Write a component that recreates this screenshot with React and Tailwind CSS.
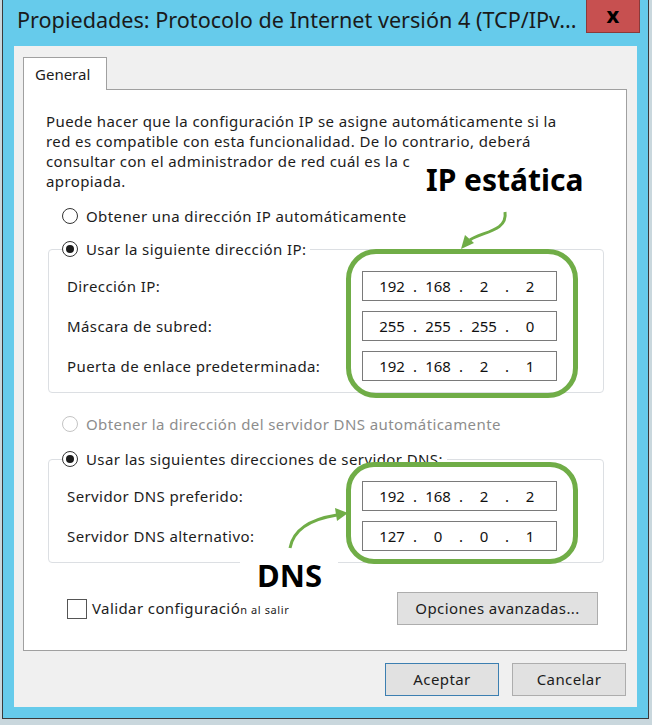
const font = { fontFamily: '"Noto Sans", "Open Sans", sans-serif' };

function Radio({ checked, disabled }) {
  return (
    <span
      className={`w-[16px] h-[16px] rounded-full border bg-white flex items-center justify-center shrink-0 ${
        disabled ? "border-[#c4c4c4]" : "border-[#333333]"
      }`}
    >
      {checked && <span className="w-[8px] h-[8px] rounded-full bg-[#1b1b1b]" />}
    </span>
  );
}

function IpBox({ parts }) {
  const cells = [];
  parts.forEach((p, i) => {
    if (i > 0)
      cells.push(
        <span key={"d" + i} className="w-[10px] text-center">
          .
        </span>
      );
    cells.push(
      <span key={"p" + i} className="w-[36px] text-center">
        {p}
      </span>
    );
  });
  return (
    <div className="w-[195px] h-[30px] border border-[#7a7a7a] bg-white flex items-center pl-[11px] text-[15px] tracking-normal text-[#111]">
      {cells}
    </div>
  );
}

function Row({ label, parts }) {
  return (
    <div className="flex items-center h-[30px] pl-[18px] pr-[46px]">
      <span className="flex-1">{label}</span>
      <IpBox parts={parts} />
    </div>
  );
}

function Group({ title, children }) {
  return (
    <fieldset className="border border-[#dcdfe3] rounded-[4px] ml-[24px] mr-[22px] pb-[11px]">
      <legend className="ml-[13px] pr-[4px] bg-white flex items-center gap-[8px] h-[20px]">
        <Radio checked />
        <span>{title}</span>
      </legend>
      <div className="flex flex-col gap-[10px] mt-[12px]">{children}</div>
    </fieldset>
  );
}

export default function App() {
  return (
    <div
      className="relative w-[652px] h-[725px] bg-[#c9d7dd] overflow-hidden text-[15px] tracking-[0.4px] text-[#1c1c1c]"
      style={font}
    >
      <div className="ml-[2px] w-[647px] h-[719px] bg-[#66cbeb] border-l border-r border-b border-[#3a3a3a] flex flex-col">
        {/* title bar */}
        <div className="h-[46px] flex items-start">
          <div className="flex-1 pl-[14px] pt-[4px] text-[21.6px] tracking-normal text-[#1a1a1a] whitespace-nowrap">
            Propiedades: Protocolo de Internet versión 4 (TCP/IPv...
          </div>
          <div className="w-[54px] h-[33px] mr-[8px] bg-[#c75050] border border-[#8a3a3a] border-t-0 flex items-center justify-center text-[22px] font-bold text-black leading-none pb-[4px]">
            x
          </div>
        </div>

        {/* client area */}
        <div className="mx-[11px] h-[661px] bg-[#f0f0f0] pt-[11px] pl-[9px] pr-[10px] flex flex-col">
          <div className="relative z-10 w-[84px] h-[33px] -mb-px bg-white border border-b-0 border-[#a0a0a0] pl-[11px] pt-[5px] tracking-normal">
            General
          </div>
          <div className="h-[562px] bg-white border border-[#a0a0a0] flex flex-col">
            <div className="pl-[22px] pt-[21px] leading-[20px] whitespace-nowrap">
              <div>Puede hacer que la configuración IP se asigne automáticamente si la</div>
              <div>red es compatible con esta funcionalidad. De lo contrario, deberá</div>
              <div>consultar con el administrador de red cuál es la c</div>
              <div>apropiada.</div>
            </div>

            <div className="flex items-center gap-[8px] h-[20px] mt-[15px] pl-[38px]">
              <Radio />
              <span>Obtener una dirección IP automáticamente</span>
            </div>

            <div className="mt-[13px]">
              <Group title="Usar la siguiente dirección IP:">
                <Row label="Dirección IP:" parts={["192", "168", "2", "2"]} />
                <Row label="Máscara de subred:" parts={["255", "255", "255", "0"]} />
                <Row label="Puerta de enlace predeterminada:" parts={["192", "168", "2", "1"]} />
              </Group>
            </div>

            <div className="flex items-center gap-[8px] h-[20px] mt-[21px] pl-[38px] text-[#8d8d8d]">
              <Radio disabled />
              <span>Obtener la dirección del servidor DNS automáticamente</span>
            </div>

            <div className="mt-[15px]">
              <Group title="Usar las siguientes direcciones de servidor DNS:">
                <Row label="Servidor DNS preferido:" parts={["192", "168", "2", "2"]} />
                <Row label="Servidor DNS alternativo:" parts={["127", "0", "0", "1"]} />
              </Group>
            </div>

            <div className="flex items-center justify-between mt-[29px] pl-[43px] pr-[28px]">
              <div className="flex items-center gap-[5px]">
                <span className="w-[20px] h-[20px] border border-[#555] bg-white" />
                <span>
                  Validar configuració<span className="text-[11px] tracking-[0.6px]">n al salir</span>
                </span>
              </div>
              <button className="w-[201px] h-[33px] bg-[#e1e1e1] border border-[#adadad]">
                Opciones avanzadas...
              </button>
            </div>
          </div>

          <div className="flex justify-end gap-[13px] mt-[12px] pr-[1px]">
            <button className="w-[114px] h-[33px] bg-[#e1e1e1] border border-[#3c7fb1]">Aceptar</button>
            <button className="w-[114px] h-[33px] bg-[#e1e1e1] border border-[#adadad]">Cancelar</button>
          </div>
        </div>
      </div>

      {/* annotations */}
      <div className="absolute left-[410px] top-[152px] w-[190px] h-[54px] bg-white flex items-center pl-[16px] text-[30px] font-bold tracking-normal text-black">
        IP estática
      </div>
      <div className="absolute left-[240px] top-[556px] w-[98px] h-[38px] bg-white flex items-center pl-[17px] text-[31px] font-bold tracking-normal text-black">
        DNS
      </div>
      <div className="absolute left-[346px] top-[249px] w-[232px] h-[149px] rounded-[30px] border-[5px] border-[#70ad47]" />
      <div className="absolute left-[346px] top-[462px] w-[232px] h-[102px] rounded-[28px] border-[5px] border-[#70ad47]" />
      <svg className="absolute left-0 top-0 pointer-events-none" width="652" height="725">
        <path d="M505 212 C 508 232, 480 232, 470 240" stroke="#70ad47" strokeWidth="3" fill="none" />
        <path d="M461 249 L 465 235 L 474 243 Z" fill="#70ad47" />
        <path d="M290 548 C 294 526, 318 518, 337 515" stroke="#70ad47" strokeWidth="3" fill="none" />
        <path d="M348 513 L 335 508 L 337 521 Z" fill="#70ad47" />
      </svg>
    </div>
  );
}
